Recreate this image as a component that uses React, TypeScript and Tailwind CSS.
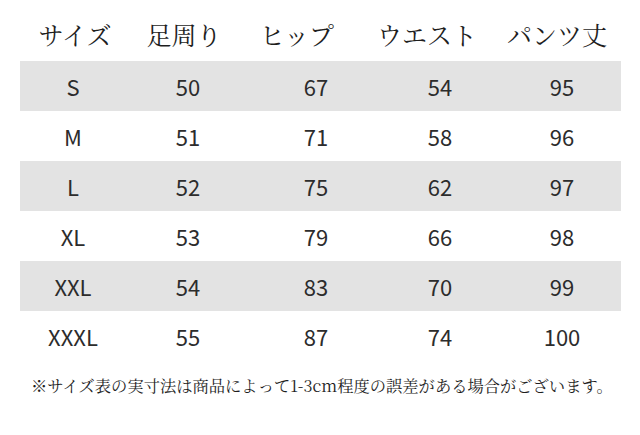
import React from "react";

const headers = ["サイズ", "足周り", "ヒップ", "ウエスト", "パンツ丈"];
const rows = [
  ["S", "50", "67", "54", "95"],
  ["M", "51", "71", "58", "96"],
  ["L", "52", "75", "62", "97"],
  ["XL", "53", "79", "66", "98"],
  ["XXL", "54", "83", "70", "99"],
  ["XXXL", "55", "87", "74", "100"],
];

const serif = "font-['Noto_Serif_CJK_JP','Noto_Sans_CJK_JP',serif]";

export default function App() {
  return (
    <div className="w-[640px] h-[435px] bg-white overflow-hidden">
      <div
        className={`grid grid-cols-[110px_108px_118px_142px_118px] ml-[20px] h-[61px] pt-[7px] items-center text-[25px] font-normal text-[#1e1e1e] ${serif}`}
      >
        {headers.map((h) => (
          <div key={h} className="text-center leading-none">
            {h}
          </div>
        ))}
      </div>
      <div className="ml-[20px] w-[601px]">
        {rows.map((r, i) => (
          <div
            key={r[0]}
            className={`grid grid-cols-[106px_124px_132px_116px_123px] h-[50px] items-center text-[22px] text-[#2c2c2c] font-['Noto_Sans_CJK_JP',sans-serif] ${
              i % 2 === 0 ? "bg-[#e3e3e3]" : "bg-white"
            }`}
          >
            {r.map((c, j) => (
              <div key={j} className={`text-center leading-none ${j === 4 ? "pl-[5px]" : ""}`}>
                {c}
              </div>
            ))}
          </div>
        ))}
      </div>
      <div
        className={`mt-[12px] pl-[31px] text-[16.3px] leading-[24px] text-[#1e1e1e] whitespace-nowrap ${serif}`}
      >
        ※サイズ表の実寸法は商品によって1-3cm程度の誤差がある場合がございます。
      </div>
    </div>
  );
}
